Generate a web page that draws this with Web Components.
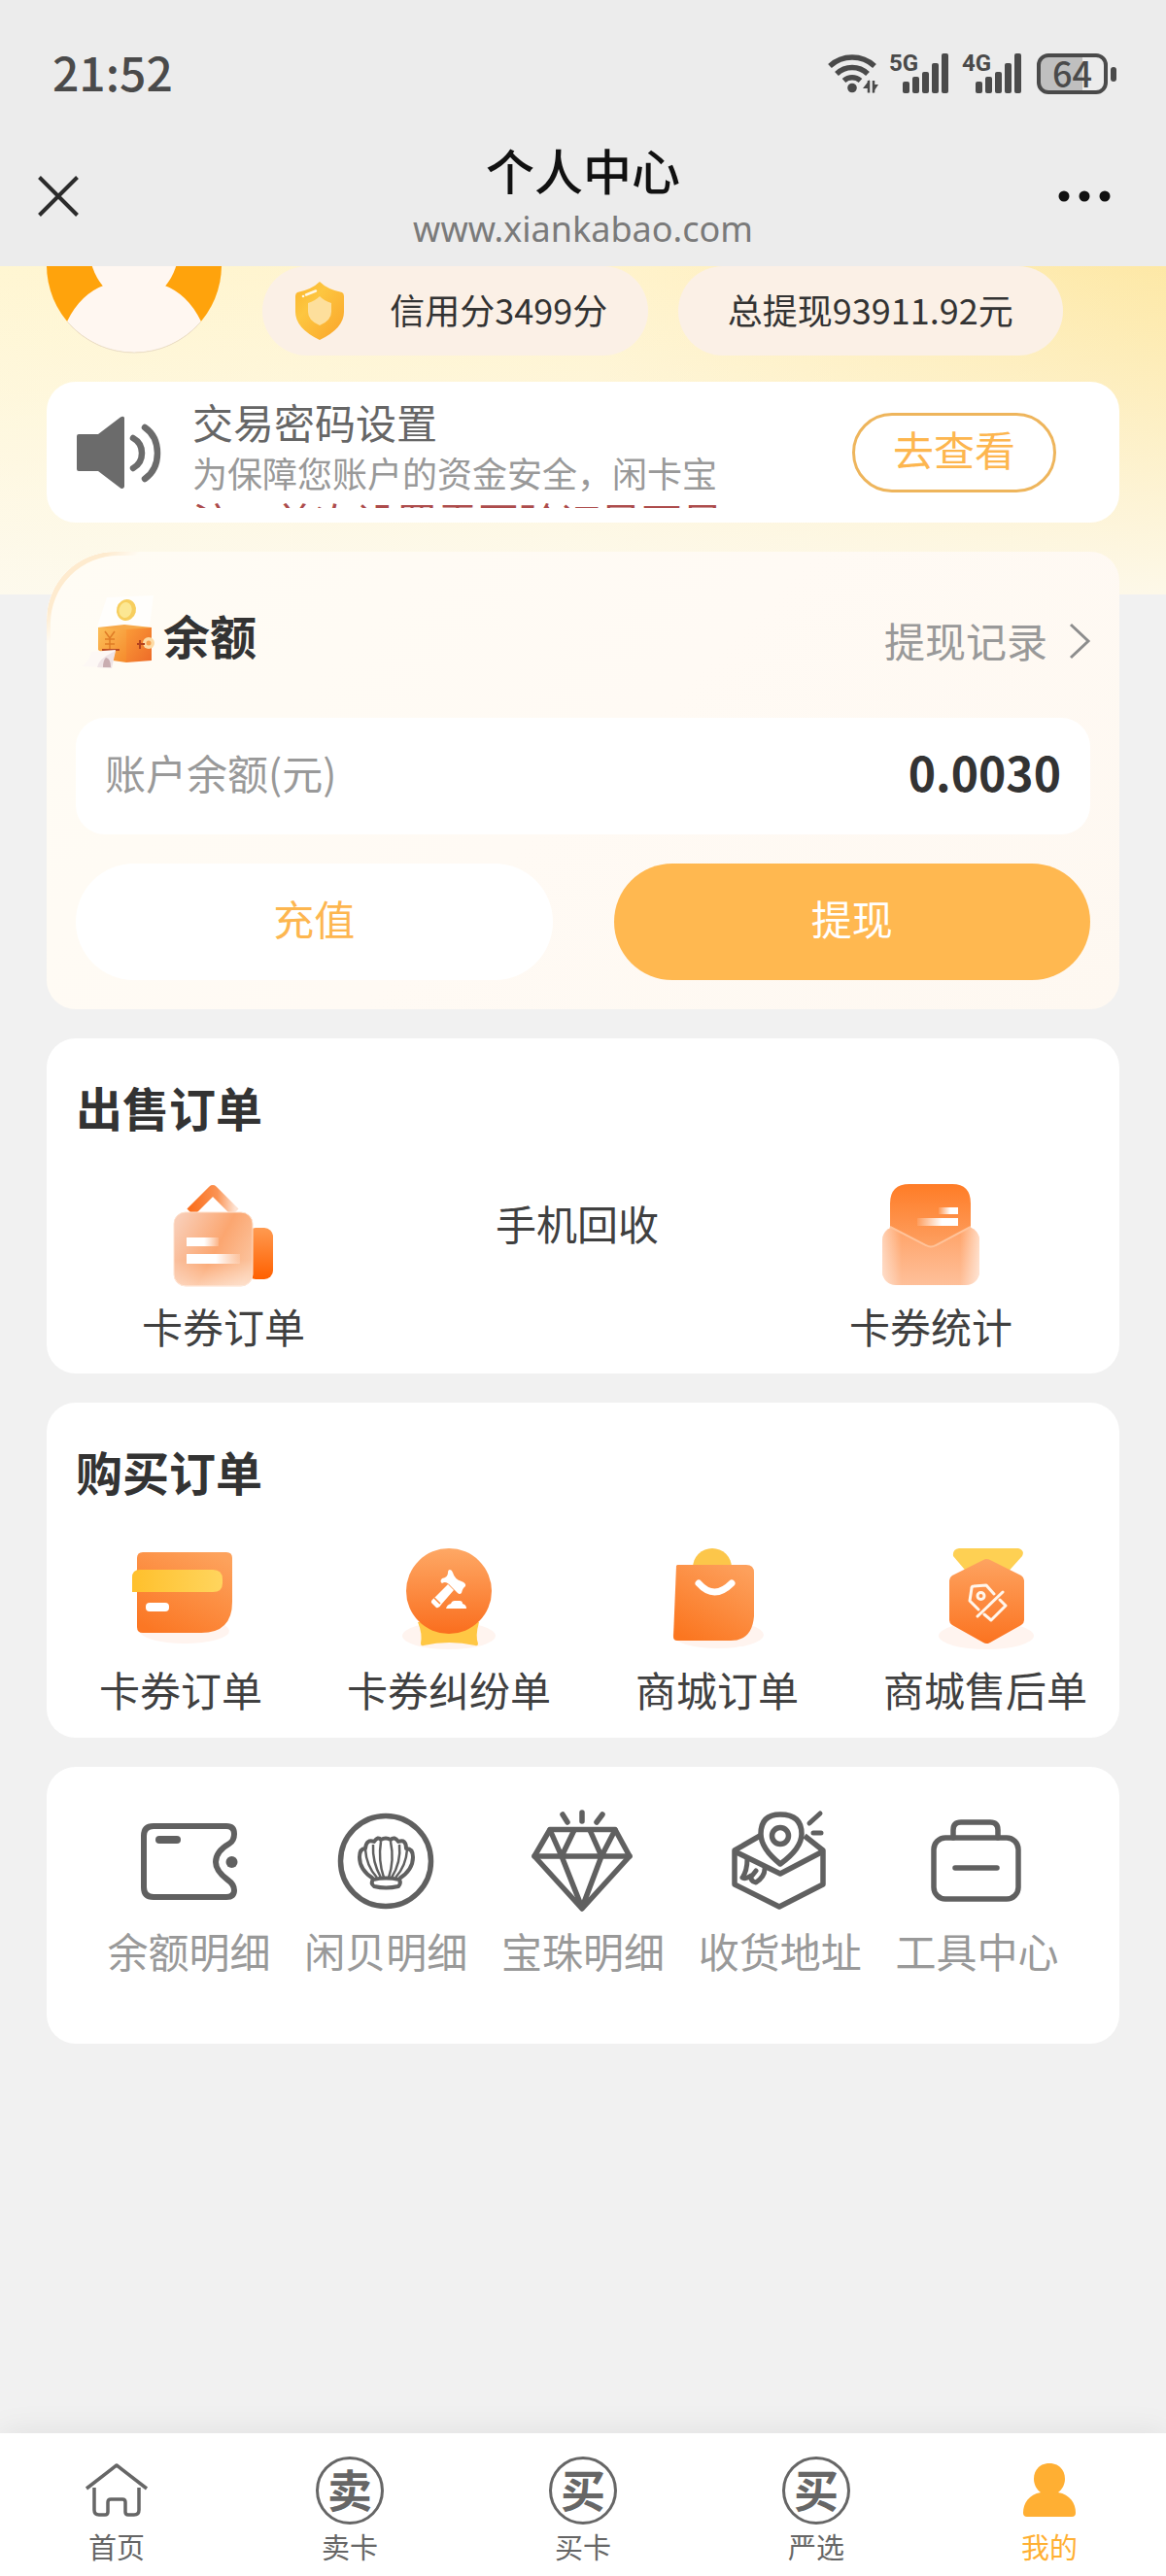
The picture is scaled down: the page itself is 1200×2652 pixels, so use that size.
<!DOCTYPE html>
<html lang="zh-CN">
<head>
<meta charset="utf-8">
<meta name="viewport" content="width=device-width, initial-scale=1">
<title>个人中心</title>
<style>
  html, body { margin: 0; padding: 0; }
  body {
    background: #f1f1f1;
    color: #333;
    font-family: "Noto Sans CJK SC", "Noto Sans", sans-serif;
    font-size: 42px;
    line-height: 1.2;
  }
</style>
</head>
<body>
<my-page></my-page>

<script>
const ICONS = {
  wifi: [50, 42, `<g fill="none" stroke="#4a4a4a" stroke-width="5.500">
      <path d="M2 13a34 34 0 0 1 46 0"/><path d="M9 21a23 23 0 0 1 32 0"/><path d="M16.500 28a13 13 0 0 1 17 0"/></g>
      <circle cx="25" cy="35.500" r="4.800" fill="#4a4a4a"/>
      <path d="M42 28v12.500M47 28v12.500" stroke="#4a4a4a" stroke-width="2.500" fill="none"/>
      <path d="M43 27v9h-7zM46 41v-9h6z" fill="#4a4a4a"/>`],
  signal: [48, 42, `<g fill="#4a4a4a"><rect x="0" y="29" width="7" height="12" rx="2"/><rect x="10" y="24" width="7" height="17" rx="2"/>
      <rect x="20" y="19" width="7" height="22" rx="2"/><rect x="30" y="10" width="7" height="31" rx="2"/><rect x="40" y="0" width="7" height="41" rx="2"/></g>`],
  close: [42, 42, `<path d="M1.500 1.500l39 39M40.500 1.500l-39 39" stroke="#2b2b2b" stroke-width="4" fill="none"/>`],
  more: [54, 12, `<g fill="#111"><circle cx="6" cy="6" r="5.500"/><circle cx="27" cy="6" r="5.500"/><circle cx="48" cy="6" r="5.500"/></g>`],
  avatar: [180, 180, `<clipPath id="c"><circle cx="90" cy="90" r="90"/></clipPath>
      <g clip-path="url(#c)"><rect width="180" height="180" fill="#ffa30c"/>
      <ellipse cx="90" cy="72" rx="46" ry="55" fill="#fff7f1"/>
      <path d="M61 110Q90 128 119 110Q145 119 159 148V180H21V148Q35 119 61 110z" fill="#fff7f1"/></g>
      <path d="M22 149a90 90 0 0 0 136 0" fill="none" stroke="#e9dfcd" stroke-width="1"/>`],
  shield: [52, 60, `<linearGradient id="g" x1="0" y1="0" x2="1" y2="1"><stop offset="0" stop-color="#fbb42c"/><stop offset=".35" stop-color="#fdc640"/><stop offset="1" stop-color="#faa42a"/></linearGradient>
      <path d="M26 0Q34 8 49 11Q51 12 51 15V31Q51 48 26 60Q1 48 1 31V15Q1 12 3 11Q18 8 26 0z" fill="url(#g)"/>
      <path d="M26 15Q31 20 38 22V31Q38 40 26 45Q14 40 14 31V22Q21 20 26 15z" fill="#fddf9c"/>
      <path d="M12 13.500L22 9.500" stroke="#fff8e4" stroke-width="2.500" stroke-linecap="round"/><circle cx="9" cy="15" r="1.300" fill="#fff8e4"/>`],
  speaker: [88, 76, `<path d="M2 19H22L45 1.500Q48 0 49 2V73Q48 76 45 74.500L22 57H2Q0 57 0 55V21Q0 19 2 19z" fill="#6b6b6b"/>
      <g fill="none" stroke="#6b6b6b" stroke-width="6.500" stroke-linecap="round"><path d="M58 23Q67 28 67 38.500Q67 49 58 54"/><path d="M70 12Q83 21 83 38.500Q83 56 70 65"/></g>`],
  chevron: [22, 38, `<path d="M2 2L20 19L2 36" fill="none" stroke="#8d8d8d" stroke-width="3"/>`],
  wallet3d: [80, 76, `<linearGradient id="a" x1="0" y1="0" x2="1" y2="1"><stop offset="0" stop-color="#fcbf58"/><stop offset="1" stop-color="#f58a2c"/></linearGradient>
      <linearGradient id="b" x1="0" y1="0" x2="1" y2="1"><stop offset="0" stop-color="#fb9c38"/><stop offset="1" stop-color="#ed6a28"/></linearGradient>
      <path d="M30 0L78-2L74 30H20z" fill="#fff" opacity=".7"/>
      <path d="M21 31L48 28L76 31V34H21z" fill="#f7a94a"/>
      <path d="M21 31L50 33V67L36 65L21 54z" fill="url(#a)"/><path d="M50 33L76 31V65L50 67z" fill="url(#b)"/>
      <ellipse cx="50" cy="13" rx="10" ry="11" fill="#f7ce5e" transform="rotate(15 50 13)"/><ellipse cx="49" cy="13" rx="6.500" ry="8" fill="#fce793" transform="rotate(15 49 13)"/>
      <path d="M28 35l5 7 5-7M33 42v11M28 43h10M28 48h10" fill="none" stroke="#df7c26" stroke-width="1.500"/>
      <path d="M25 54H43" stroke="#b94a20" stroke-width="2"/>
      <path d="M14 56L39 54L34 72L4 71Q12 66 14 56z" fill="#fdf8f5"/><path d="M35 57L39 55L35 73L20 72Q22 63 35 57z" fill="#efe4e6"/><path d="M29 62q5 1 5 10h-8q0-7 3-10z" fill="#c9adb0"/>
      <circle cx="73" cy="47" r="6" fill="#fddba4"/><circle cx="73" cy="47" r="2.500" fill="#f8a150"/><path d="M61 48h8M64 44v9" stroke="#b4431e" stroke-width="2"/>`],
  sellOrder: [104, 108, `<linearGradient id="a" x1="0" y1=".2" x2="1" y2=".7"><stop offset="0" stop-color="#f9cdb6"/><stop offset=".55" stop-color="#fba670"/><stop offset="1" stop-color="#fcc5a0"/></linearGradient>
      <linearGradient id="b" x1="0" y1="0" x2="0" y2="1"><stop offset="0" stop-color="#ff9a50"/><stop offset="1" stop-color="#ff6000"/></linearGradient>
      <linearGradient id="d" x1="0" y1="0" x2="1" y2="0"><stop offset="0" stop-color="#fa6f1e"/><stop offset=".6" stop-color="#fb9353"/><stop offset="1" stop-color="#fde2d2"/></linearGradient>
      <linearGradient id="w" x1="0" y1="0" x2="1" y2="0"><stop offset="0" stop-color="#fff"/><stop offset=".55" stop-color="#fff"/><stop offset="1" stop-color="#fff" stop-opacity=".15"/></linearGradient>
      <linearGradient id="v" x1="0" y1="0" x2="0" y2="1"><stop offset="0" stop-color="#fff" stop-opacity="0"/><stop offset=".65" stop-color="#fff" stop-opacity="0"/><stop offset="1" stop-color="#fff" stop-opacity=".45"/></linearGradient>
      <path d="M18 31L41 8L64 31" fill="none" stroke="url(#d)" stroke-width="10" stroke-linejoin="round"/>
      <rect x="76" y="47" width="27" height="53" rx="9" fill="url(#b)"/>
      <rect x="1" y="31" width="81" height="76" rx="12" fill="url(#a)" stroke="#fee0cc" stroke-width="1"/><rect x="1" y="31" width="81" height="76" rx="12" fill="url(#v)"/>
      <rect x="14" y="57" width="33" height="9" fill="url(#w)"/><rect x="14" y="74" width="55" height="10" fill="url(#w)"/>`],
  stats: [104, 108, `<linearGradient id="a" x1="0" y1="0" x2="0" y2="1"><stop offset="0" stop-color="#ff7c26"/><stop offset="1" stop-color="#fda062"/></linearGradient>
      <linearGradient id="b" x1="0" y1="0" x2="0" y2="1"><stop offset="0" stop-color="#ffa266"/><stop offset="1" stop-color="#fec09a"/></linearGradient>
      <linearGradient id="e" x1="0" y1="0" x2="1" y2="0"><stop offset="0" stop-color="#fff" stop-opacity=".5"/><stop offset=".2" stop-color="#fff" stop-opacity="0"/><stop offset=".8" stop-color="#fff" stop-opacity="0"/><stop offset="1" stop-color="#fff" stop-opacity=".6"/></linearGradient>
      <linearGradient id="w" x1="0" y1="0" x2="1" y2="0"><stop offset="0" stop-color="#fff" stop-opacity=".1"/><stop offset=".6" stop-color="#fff"/><stop offset="1" stop-color="#fff"/></linearGradient>
      <rect x="2" y="46" width="100" height="60" rx="14" fill="url(#b)"/><rect x="2" y="46" width="100" height="60" rx="14" fill="url(#e)"/>
      <path d="M10 46V22Q10 2 30 2H74Q93 2 93 22V46L57 65Q52 68 47 65z" fill="url(#a)"/>
      <path d="M10 46L47 65Q52 68 57 65L93 46" fill="none" stroke="#ffc39a" stroke-width="2"/>
      <rect x="60" y="26" width="20" height="7" fill="url(#w)"/><rect x="38" y="37" width="42" height="8" fill="url(#w)"/>`],
  buyCard: [108, 108, `<linearGradient id="a" x1=".2" y1="1" x2=".8" y2="0"><stop offset="0" stop-color="#fb7724"/><stop offset="1" stop-color="#fda25c"/></linearGradient>
      <linearGradient id="b" x1="0" y1="0" x2="1" y2="0"><stop offset="0" stop-color="#ffc02c"/><stop offset="1" stop-color="#ffd55e"/></linearGradient>
      <ellipse cx="58" cy="91" rx="46" ry="13" fill="#fff4ef"/>
      <path d="M15 10H101Q107 10 107 16V61Q107 93 75 93H15Q9 93 9 87V16Q9 10 15 10z" fill="url(#a)"/>
      <path d="M12 28H87Q97 28 97 38V42Q97 51 87 51H4V36Q4 28 12 28z" fill="url(#b)"/><rect x="18" y="62" width="24" height="9" rx="4" fill="#fff"/>`],
  dispute: [108, 108, `<linearGradient id="a" x1="0" y1="0" x2="0" y2="1"><stop offset="0" stop-color="#fea865"/><stop offset="1" stop-color="#fa6e1e"/></linearGradient>
      <ellipse cx="54" cy="96" rx="48" ry="14" fill="#fff4ef"/>
      <path d="M22 82H85Q81 96 84 104Q84 107 81 106Q54 100 28 106Q25 107 25 104Q27 94 22 82z" fill="#ffc744"/>
      <circle cx="54" cy="50" r="44" fill="url(#a)"/>
      <g fill="#fff"><path d="M55 28Q57 28 58 31Q60 38 67 40Q72 42 71 45Q68 47 67 52Q65 54 63 52L56 45Q51 39 47 42Q44 40 47 37Q53 36 53 31Q53 28 55 28z"/>
      <path d="M53 43L59 49L46 64Q44 68 41 67L36 62Q35 60 39 57z"/><path d="M51 68Q52 64 56 63Q57 60 60 60H65Q68 60 68 63Q72 64 72 68z"/></g>
      <path d="M39 57l6 6" stroke="#fc8a3c" stroke-width="1.500"/>`],
  bag: [108, 108, `<linearGradient id="a" x1=".2" y1="1" x2=".8" y2="0"><stop offset="0" stop-color="#fb7620"/><stop offset="1" stop-color="#fda05c"/></linearGradient>
      <ellipse cx="55" cy="95" rx="47" ry="14" fill="#fff4ef"/><circle cx="49" cy="26" r="20" fill="#fcc64a"/>
      <path d="M13 23H84Q92 23 92 31V76Q90 101 68 101H13Q9 101 9 97L12 24z" fill="url(#a)"/>
      <path d="M35 42Q51 60 69 42" fill="none" stroke="#fff" stroke-width="7" stroke-linecap="round"/>`],
  aftersale: [108, 108, `<linearGradient id="a" x1="0" y1="0" x2="0" y2="1"><stop offset="0" stop-color="#fea360"/><stop offset="1" stop-color="#fb7320"/></linearGradient>
      <ellipse cx="55" cy="96" rx="49" ry="14" fill="#fff4ef"/>
      <path d="M27 6H88Q95 8 92 14L74 34H38L21 14Q20 7 27 6z" fill="#fed053"/>
      <path d="M52 18Q55 16 59 18L91 34Q94 36 94 39V80Q94 83 91 85L59 103Q55 105 52 103L20 85Q17 83 17 80V39Q17 36 20 34z" fill="url(#a)"/>
      <g fill="none" stroke="#fff6ec" stroke-width="3" stroke-linecap="round" stroke-linejoin="round"><path d="M63 53L55 44L42 45Q40 45 40 47L38 60L47 69"/><path d="M72 51L46 76"/><path d="M69 59L75 65L60 80L53 74"/><circle cx="49.500" cy="55" r="3.500"/></g>`],
  wallet: [108, 108, `<g fill="none" stroke="#606060" stroke-width="6" stroke-linejoin="round"><path d="M18 20H93Q101 20 101 28Q101 35 96 38Q82 46 82 57Q82 66 94 75Q101 80 101 86Q101 93 93 93H18Q8 93 8 83V30Q8 20 18 20z"/></g>
      <circle cx="98.500" cy="57" r="6" fill="#606060"/><rect x="20" y="30" width="26" height="8" rx="4" fill="#606060"/>`],
  shell: [108, 108, `<g fill="none" stroke="#606060" stroke-linejoin="round"><circle cx="54" cy="56" r="46.500" stroke-width="5.500"/>
      <path stroke-width="4" d="M41 74Q27 65 27 52Q27 43 33 43Q34 33 42 36Q46 30 49 34Q54 31 59 34Q63 30 67 36Q75 33 75 43Q82 43 82 52Q82 65 68 74"/>
      <path stroke-width="4" d="M41 75Q54 72 68 75Q70 79 67 82Q54 85 42 82Q38 79 41 75z"/>
      <path stroke-width="2.500" d="M49 36Q46 55 52 73M59 36Q63 55 57 73M41 39Q40 57 49 73M68 39Q70 57 60 73M33 44Q34 61 45 73M76 44Q75 61 64 73"/></g>`],
  diamond: [108, 108, `<g fill="none" stroke="#606060" stroke-width="5.500" stroke-linejoin="round" stroke-linecap="round"><path d="M20 23.500H87L102 51L53 105L4 51z"/><path d="M4 51H102M20 24L32 51L45 24M61 24L73 51L87 24M32 51L53 104L73 51"/><path d="M53 6V15M33 8L38 16M74 8L68 16"/></g>`],
  address: [108, 108, `<g fill="none" stroke="#606060" stroke-width="5.500" stroke-linejoin="round"><path d="M33 30L7 45V80L53 103L98 80V45L79 30"/><path d="M7 46L54 69L98 46"/><path d="M54 59Q34 43 34 28Q34 8 54 8Q76 8 76 28Q76 43 54 59z"/><circle cx="54" cy="30" r="8.500"/></g>
      <g fill="none" stroke="#606060" stroke-width="5" stroke-linejoin="round" stroke-linecap="round"><path d="M20 54Q20 66 15 73Q19 75 24 71Q23 77 29 78Q38 72 38 64M25 71L29 66"/><path d="M95 7L84 17M88 27H96"/></g>`],
  toolbox: [108, 108, `<g fill="none" stroke="#606060" stroke-width="5.500" stroke-linecap="round"><rect x="9" y="32" width="87" height="63" rx="12"/><path d="M29 32V24Q29 16 37 16H67Q75 16 75 24V32"/><path d="M31 63H74"/></g>`],
  home: [66, 56, `<g fill="none" stroke="#666" stroke-width="3.500" stroke-linejoin="round"><path d="M2 26L33 2L64 26"/><path d="M10 25V48Q10 53 15 53H21Q24 53 24 50V40Q24 37 27 37H39Q42 37 42 40V50Q42 53 45 53H51Q56 53 56 48V25"/></g>`],
  person: [56, 56, `<path d="M28 0C38 0 44 7 44 16C44 22 41 27 37 30C49 32 55 41 55 51Q55 55 51 55H5Q1 55 1 51C1 41 7 32 19 30C15 27 12 22 12 16C12 7 18 0 28 0z" fill="#ffaf33"/>`]
};

/* Base class: every element renders one static template into an open root */
class Base extends HTMLElement {
  constructor() { super(); this.attachShadow({ mode: "open" }); }
  connectedCallback() { this.shadowRoot.innerHTML = this.render(); }
  attr(n) { return this.getAttribute(n) || ""; }
}

customElements.define("my-icon", class extends Base {
  render() {
    const [w, h, body] = ICONS[this.attr("name")];
    return `<style>:host{display:block;flex:none}svg{display:block;overflow:visible}</style>
      <svg width="${w}" height="${h}" viewBox="0 0 ${w} ${h}" aria-hidden="true">${body}</svg>`;
  }
});

customElements.define("status-bar", class extends Base {
  render() {
    return `<style>
      :host{display:flex;align-items:center;justify-content:space-between;height:152px;padding:0 51px 0 54px;color:#4a4a4a;box-sizing:border-box}
      .time{font-size:48px;font-weight:500;line-height:58px;padding-bottom:6px}
      .right{display:flex;align-items:center;gap:13px}
      .net{display:flex;width:62px;height:42px;justify-content:flex-end;position:relative}
      .net span{position:absolute;left:0;top:0;font:700 24px/20px Roboto,sans-serif}
      .cell{display:flex;align-items:center;gap:3px;margin-left:2px}
      .box{box-sizing:border-box;width:73px;height:42px;border:4px solid #4a4a4a;border-radius:12px;
        background:linear-gradient(to right,#bfbfbf 66%,transparent 66%);font-size:36px;line-height:30px;font-weight:500;text-align:center}
      .nub{width:6px;height:15px;border-radius:3px;background:#4a4a4a}
    </style>
    <span class="time">21:52</span>
    <div class="right">
      <my-icon name="wifi"></my-icon>
      <div class="net"><span>5G</span><my-icon name="signal"></my-icon></div>
      <div class="net"><span>4G</span><my-icon name="signal"></my-icon></div>
      <div class="cell"><div class="box">64</div><div class="nub"></div></div>
    </div>`;
  }
});

customElements.define("title-bar", class extends Base {
  render() {
    return `<style>
      :host{display:flex;align-items:center;justify-content:space-between;height:122px;padding:0 39px 22px;box-sizing:border-box}
      button{border:0;background:none;padding:0;width:90px;display:flex}
      button:last-child{justify-content:center}
      .mid{display:flex;flex-direction:column;align-items:center}
      h1{margin:4px 0 0;font-size:50px;line-height:64px;font-weight:500;color:#111}
      p{margin:0;font-size:36px;line-height:60px;color:#7a7a7a;font-family:"Noto Sans",sans-serif}
    </style>
    <button aria-label="关闭"><my-icon name="close"></my-icon></button>
    <div class="mid"><h1>个人中心</h1><p>www.xiankabao.com</p></div>
    <button aria-label="更多"><my-icon name="more"></my-icon></button>`;
  }
});

customElements.define("profile-strip", class extends Base {
  render() {
    return `<style>
      :host{display:flex;align-items:flex-end;height:92px;margin-bottom:27px}
      .avatar{align-self:flex-start;margin:-91px 42px 0 0}
      .pills{flex:1;display:grid;grid-template-columns:1fr 1fr;gap:31px;margin-right:58px}
      .pill{display:flex;align-items:center;justify-content:center;height:92px;border-radius:46px;background:#fbf0e6;font-size:36px;line-height:46px;color:#333;gap:46px;box-sizing:border-box}
      .pill span{padding-bottom:4px}
      .score{padding-right:8px}
    </style>
    <my-icon class="avatar" name="avatar"></my-icon>
    <div class="pills"><div class="pill score"><my-icon name="shield"></my-icon><span>信用分3499分</span></div>
    <div class="pill"><span>总提现93911.92元</span></div></div>`;
  }
});

customElements.define("notice-card", class extends Base {
  render() {
    return `<style>
      :host{display:flex;align-items:center;height:145px;border-radius:30px;background:#fff;padding:0 65px 0 31px;box-sizing:border-box}
      .text{align-self:flex-start;box-sizing:border-box;width:546px;height:130px;padding-top:13px;margin-left:31px;overflow:hidden;color:#999;font-size:36px;line-height:50px;white-space:nowrap}
      .text > *{margin:0;font-weight:400}
      h2{font-size:42px;line-height:55px;color:#666}
      .warn{font-size:42px;color:#ad4c4c}
      button{margin-left:auto;width:210px;height:82px;border:3px solid #eeb55c;border-radius:41px;background:none;color:#fdb64f;font:inherit;line-height:60px;padding:0 0 8px}
    </style>
    <my-icon name="speaker"></my-icon>
    <div class="text"><h2>交易密码设置</h2><p>为保障您账户的资金安全，闲卡宝</p><p class="warn">注：首次设置需要验证是否是</p></div>
    <button>去查看</button>`;
  }
});

customElements.define("balance-card", class extends Base {
  render() {
    return `<style>
      :host{display:block;height:471px;box-sizing:border-box;padding:0 30px 30px;border-radius:70px 30px 30px 30px;position:relative;overflow:hidden;
        background:linear-gradient(135deg,#fffcf4,#fffaf4 50%,#fef8f1)}
      .arc{position:absolute;left:0;top:0;width:160px;height:160px;border-radius:70px 0 0 0;box-shadow:inset 4px 4px 0 #feebcf;
        -webkit-mask:linear-gradient(135deg,#000 20%,transparent 30%);mask:linear-gradient(135deg,#000 20%,transparent 30%)}
      header{display:flex;align-items:center;height:170px}
      header my-icon[name=wallet3d]{margin:0 8px 0 2px}
      h2{margin:0;font-size:48px;line-height:60px;font-weight:700;color:#333}
      a{margin-left:auto;display:flex;align-items:center;gap:22px;color:#999;text-decoration:none;line-height:52px;padding-top:14px}
      a span{padding-bottom:2px}
      .row{display:flex;align-items:center;justify-content:space-between;height:120px;padding:0 30px 8px;border-radius:30px;background:#fff;color:#999;box-sizing:border-box;margin-top:1px}
      strong{font-size:48px;color:#333}
      .actions{display:flex;gap:63px;margin-top:30px}
      button{flex:1;height:120px;border:0;border-radius:60px;font:inherit;background:#fff;color:#fdb64f;padding:0 0 8px}
      button.main{background:#ffb850;color:#fff}
    </style>
    <div class="arc"></div>
    <header><my-icon name="wallet3d"></my-icon><h2>余额</h2><a href="#records"><span>提现记录</span><my-icon name="chevron"></my-icon></a></header>
    <div class="row"><span>账户余额(元)</span><strong>0.0030</strong></div>
    <div class="actions"><button>充值</button><button class="main">提现</button></div>`;
  }
});

customElements.define("menu-item", class extends Base {
  render() {
    const icon = this.attr("icon");
    return `<style>
      :host{display:block}
      :host([textonly]){padding-top:16px}
      a{display:flex;flex-direction:column;align-items:center;gap:var(--item-gap,14px);color:inherit;text-decoration:none;line-height:52px;white-space:nowrap}
    </style><a href="#">${icon ? `<my-icon name="${icon}"></my-icon>` : ""}<span><slot></slot></span></a>`;
  }
});

customElements.define("menu-card", class extends Base {
  render() {
    const t = this.attr("heading");
    return `<style>
      :host{display:block;box-sizing:border-box;border-radius:30px;background:#fff;color:#404040;padding-bottom:23px}
      h2{margin:0;padding:40px 30px 48px;font-size:48px;line-height:60px;font-weight:700;color:#333}
      .grid{display:grid;grid-auto-flow:column;grid-auto-columns:1fr}
      :host([cols="3"]) .grid{margin-right:12px}
      :host([cols="4"]){--item-gap:17px;padding-bottom:24px}
      :host([cols="4"]) h2{padding-bottom:44px}
      :host([plain]){color:#999;padding:41px 45px 70px;--item-gap:14px}
      slot{display:contents}
    </style>${t ? `<h2>${t}</h2>` : ""}<div class="grid"><slot></slot></div>`;
  }
});

customElements.define("tab-item", class extends Base {
  render() {
    const icon = this.attr("icon"), badge = this.attr("badge");
    return `<style>
      :host{display:block;flex:1;color:#666}
      :host([active]){color:#ffaf33}
      a{display:flex;flex-direction:column;align-items:center;color:inherit;text-decoration:none;font-size:29px;line-height:36px}
      .ic{display:flex;align-items:center;justify-content:center;height:72px;margin:23px 0 3px}
      .ring{box-sizing:border-box;width:70px;height:70px;border:3px solid #666;border-radius:50%;font-size:46px;font-weight:700;line-height:58px;text-align:center}
    </style><a href="#"><div class="ic">${badge ? `<div class="ring">${badge}</div>` : `<my-icon name="${icon}"></my-icon>`}</div><slot></slot></a>`;
  }
});

customElements.define("tab-bar", class extends Base {
  render() {
    return `<style>:host{display:block}nav{display:flex;height:147px;background:#fff;box-shadow:0 0 32px rgba(0,0,0,.08)}</style><nav><slot></slot></nav>`;
  }
});

customElements.define("my-page", class extends Base {
  render() {
    return `<style>
      :host{display:flex;flex-direction:column;min-height:100vh}
      .top{background:#ececec}
      main{flex:1;overflow:hidden;padding:0 48px 30px;
        background:linear-gradient(to bottom,rgba(253,250,240,0),rgba(253,250,240,.9)) 0 0/100% 338px no-repeat,
          linear-gradient(100deg,#fff6d2 0%,#fff3cc 50%,#fde7a2 100%) 0 0/100% 338px no-repeat}
      .cards{display:flex;flex-direction:column;gap:30px}
      tab-bar{position:sticky;bottom:0}
    </style>
    <div class="top"><status-bar></status-bar><title-bar></title-bar></div>
    <main>
      <profile-strip></profile-strip>
      <div class="cards">
        <notice-card></notice-card>
        <balance-card></balance-card>
        <menu-card heading="出售订单" cols="3">
          <menu-item icon="sellOrder">卡券订单</menu-item>
          <menu-item textonly>手机回收</menu-item>
          <menu-item icon="stats">卡券统计</menu-item>
        </menu-card>
        <menu-card heading="购买订单" cols="4">
          <menu-item icon="buyCard">卡券订单</menu-item>
          <menu-item icon="dispute">卡券纠纷单</menu-item>
          <menu-item icon="bag">商城订单</menu-item>
          <menu-item icon="aftersale">商城售后单</menu-item>
        </menu-card>
        <menu-card plain>
          <menu-item icon="wallet">余额明细</menu-item>
          <menu-item icon="shell">闲贝明细</menu-item>
          <menu-item icon="diamond">宝珠明细</menu-item>
          <menu-item icon="address">收货地址</menu-item>
          <menu-item icon="toolbox">工具中心</menu-item>
        </menu-card>
      </div>
    </main>
    <tab-bar>
      <tab-item icon="home">首页</tab-item>
      <tab-item badge="卖">卖卡</tab-item>
      <tab-item badge="买">买卡</tab-item>
      <tab-item badge="买">严选</tab-item>
      <tab-item icon="person" active>我的</tab-item>
    </tab-bar>`;
  }
});
</script>
</body>
</html>
